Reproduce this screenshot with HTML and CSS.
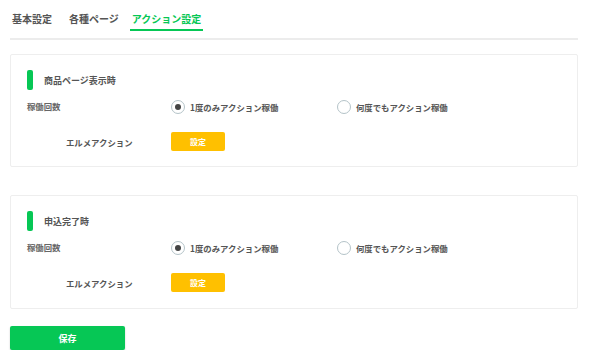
FILE: index.html
```html
<!DOCTYPE html>
<html lang="ja">
<head>
  <meta charset="UTF-8" />
  <title>アクション設定</title>
  <link rel="stylesheet" href="styles.css">
</head>
<body>
  <div class="page">
    <nav class="tabs">
      <a class="tab first">基本設定</a>
      <a class="tab">各種ページ</a>
      <a class="tab active">アクション設定</a>
    </nav>

    <section class="card">
      <div class="card-title"><span class="bar"></span>商品ページ表示時</div>
      <div class="row">
        <div class="label">稼働回数</div>
        <label class="radio checked"><span class="dot"></span>1度のみアクション稼働</label>
        <label class="radio"><span class="dot"></span>何度でもアクション稼働</label>
      </div>
      <div class="row action-row">
        <div class="label indent">エルメアクション</div>
        <button class="btn-set">設定</button>
      </div>
    </section>

    <section class="card second">
      <div class="card-title"><span class="bar"></span>申込完了時</div>
      <div class="row">
        <div class="label">稼働回数</div>
        <label class="radio checked"><span class="dot"></span>1度のみアクション稼働</label>
        <label class="radio"><span class="dot"></span>何度でもアクション稼働</label>
      </div>
      <div class="row action-row">
        <div class="label indent">エルメアクション</div>
        <button class="btn-set">設定</button>
      </div>
    </section>

    <button class="btn-save">保存</button>
  </div>
</body>
</html>
```

FILE: styles.css
```css
body, html {
  margin: 0;
  padding: 0;
  background: #fff;
  color: #555;
  font-family: "Noto Sans CJK JP", "Noto Sans", sans-serif;
}
.page {
  width: 568px;
  padding: 0 10px;
}
.tabs {
  display: flex;
  gap: 9px;
  height: 40px;
  box-sizing: border-box;
  border-bottom: 2px solid #ececec;
}
.tab {
  font-size: 10px;
  line-height: 14px;
  font-weight: 700;
  color: #555;
  padding: 12px 2px 3px;
  border-bottom: 2px solid transparent;
  height: 14px;
}
.tab.first {
  margin-right: 4px;
}
.tab.active {
  color: #06c755;
  border-bottom-color: #06c755;
}
.card {
  margin-top: 14px;
  border: 1px solid #eee;
  border-radius: 2px;
  padding: 15px 16px 15px;
}
.card.second {
  margin-top: 28px;
  padding-bottom: 16px;
}
.card-title {
  display: flex;
  align-items: center;
  height: 20px;
  font-size: 9px;
  font-weight: 700;
  color: #555;
}
.bar {
  width: 6px;
  height: 20px;
  border-radius: 2px;
  background: #06c755;
  margin-right: 11px;
}
.row {
  display: flex;
  align-items: center;
  margin-top: 10px;
  height: 14px;
  font-size: 8.4px;
  font-weight: 700;
}
.label {
  width: 144px;
  color: #666;
  align-self: flex-start;
  line-height: 12px;
}
.label.indent {
  padding-left: 39px;
  box-sizing: border-box;
  align-self: center;
  color: #555;
}
.radio {
  display: flex;
  align-items: center;
  width: 166px;
  color: #555;
}
.dot {
  width: 14px;
  height: 14px;
  box-sizing: border-box;
  border: 1.5px solid #b4c3c8;
  border-radius: 50%;
  margin-right: 5px;
  display: flex;
  align-items: center;
  justify-content: center;
}
.radio.checked .dot::after {
  content: "";
  width: 6px;
  height: 6px;
  border-radius: 50%;
  background: #444;
}
.action-row {
  margin-top: 18px;
  height: 19px;
}
.btn-set {
  width: 54px;
  height: 19px;
  border: none;
  border-radius: 2px;
  background: #ffc000;
  color: #fff;
  font-family: inherit;
  font-size: 8px;
  font-weight: 700;
  padding: 0;
}
.btn-save {
  display: block;
  margin-top: 17px;
  width: 115px;
  height: 24px;
  border: none;
  border-radius: 2px;
  background: #06c755;
  color: #fff;
  font-family: inherit;
  font-size: 9px;
  font-weight: 700;
  box-shadow: 0 1px 2px rgba(0, 0, 0, 0.2);
}
```
